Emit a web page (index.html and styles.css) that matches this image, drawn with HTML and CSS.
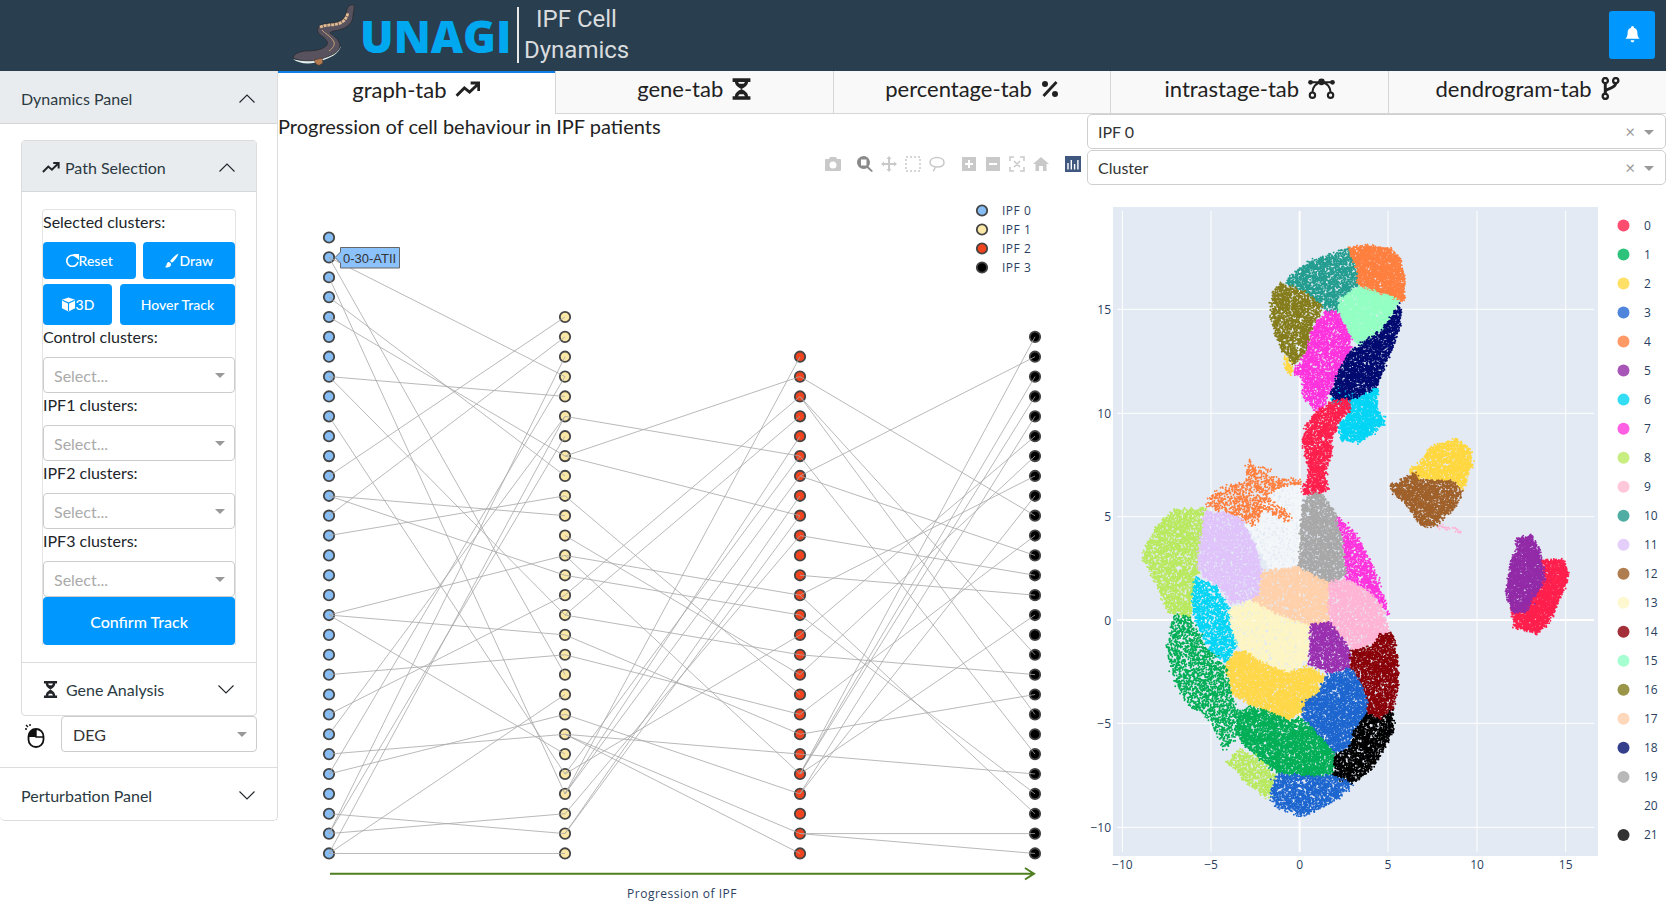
FILE: index.html
```html
<!DOCTYPE html>
<html lang="en">
<head>
  <meta charset="UTF-8" />
  <title>UNAGI IPF Cell Dynamics</title>
  <link rel="stylesheet" href="styles.css">
</head>
<body>
  <header class="topbar">
    <div class="brand">
      <svg class="eel" viewBox="0 0 80 70" width="80" height="70">
        <path class="eel-belly" d="M8 58 C14 63 26 64 36 60 C45 57 54 53 56 45 C51 53 42 55 34 58 C25 60 15 60 8 58 Z" />
        <path class="eel-body" d="M8 57 C9 53 13 51 20 50 C28 50 37 49 41 45 C44 42 42 39 38 36 C33 33 31 29 34 25 C39 21 50 23 56 19 C61 16 61 12 62 8 C63 5 66 3 69 4 C70 8 68 10 68 15 C68 22 62 27 54 29 C50 30 46 30 45 32 C49 35 55 39 55 45 C54 52 45 55 36 58 C27 61 14 60 8 57 Z" />
        <path class="eel-fin" d="M35 26 C42 23 52 25 58 20.500 C61 18 62 15 63 12" />
        <path class="eel-stripe" d="M37 29 C39 32 46 35 49 41 C50 44 48 47 44 50" />
        <path class="eel-head" d="M29 59 L37 57 L38 62 L34 64.500 L31 63 Z" />
      </svg>
      <span class="brand-name">UNAGI</span>
      <span class="brand-sub"><span>IPF Cell<br>Dynamics</span></span>
    </div>
    <button class="bell-btn">
      <svg viewBox="0 0 16 18" width="15" height="17"><path d="M8 0 C9 0 9.600 .8 9.500 1.700 C12 2.400 13.200 4.500 13.200 7 C13.200 10.500 14.200 12 15.500 13.500 L.5 13.500 C1.800 12 2.800 10.500 2.800 7 C2.800 4.500 4 2.400 6.500 1.700 C6.400 .8 7 0 8 0 Z M6 15 H10 C10 16.300 9 17.200 8 17.200 C7 17.200 6 16.300 6 15 Z" /></svg>
    </button>
  </header>

  <div class="layout">
    <aside class="sidebar">
      <div class="acc-head acc-head-open outer-head">
        <span>Dynamics Panel</span>
        <svg class="chev" viewBox="0 0 16 9" width="16" height="9"><path d="M.5 8.500 L8 1 L15.500 8.500" /></svg>
      </div>
      <div class="panel-body">
        <div class="inner-acc">
          <div class="acc-head acc-head-open inner-head">
            <span class="head-title">
              <svg class="ico-trend-sm" viewBox="0 0 20 14" width="18" height="13"><path d="M1 12 L7 6 L11 9.500 L18 2.500 M12.500 2 H18.500 V8" /></svg>
              Path Selection
            </span>
            <svg class="chev" viewBox="0 0 16 9" width="16" height="9"><path d="M.5 8.500 L8 1 L15.500 8.500" /></svg>
          </div>
          <div class="inner-body">
            <div class="track-card">
              <div class="field-label">Selected clusters:</div>
              <div class="btn-row btn-row-a">
                <button class="btn btn-half">
                  <svg class="btn-ico" viewBox="0 0 14 14" width="13" height="13"><path d="M11.500 3.500 A6 6 0 1 0 12.800 8.500" /><path class="solid" d="M9 .5 L13.500 .5 L13.500 5 Z" /></svg>Reset
                </button>
                <button class="btn btn-half">
                  <svg viewBox="0 0 16 16" width="15" height="15"><path class="solid" d="M15.500 .5 C13 1.500 9 5 6.500 8.500 L8.500 10.500 C11.500 8 14.500 4 15.500 .5 Z M5.500 9.500 C3 9.500 3 12 2.500 13.500 C2 14.500 1 15 .5 15 C3 16 8 15.500 7.500 11.500 Z" /></svg>Draw
                </button>
              </div>
              <div class="btn-row btn-row-b">
                <button class="btn btn-3d">
                  <svg viewBox="0 0 16 16" width="15" height="15"><path class="solid" d="M8 .5 L15 3 V12 L8 15.500 L1 12 V3 Z" /><path class="cut" d="M1.500 3.500 L8 6.500 L14.500 3.500 M8 6.500 V15" /></svg>3D
                </button>
                <button class="btn btn-hover">Hover Track</button>
              </div>
              <div class="field-label">Control clusters:</div>
              <div class="select select-empty">Select...<i class="caret"></i></div>
              <div class="field-label">IPF1 clusters:</div>
              <div class="select select-empty">Select...<i class="caret"></i></div>
              <div class="field-label">IPF2 clusters:</div>
              <div class="select select-empty">Select...<i class="caret"></i></div>
              <div class="field-label">IPF3 clusters:</div>
              <div class="select select-empty">Select...<i class="caret"></i></div>
              <button class="btn btn-confirm">Confirm Track</button>
            </div>
          </div>
          <div class="acc-head inner-closed">
            <span class="head-title">
              <svg class="ico-dna-sm" viewBox="0 0 16 18" width="15" height="17"><path d="M1 0 H15 V2.500 H13 C13 6 10 7.500 8 9 C10 10.500 13 12 13 15.500 H15 V18 H1 V15.500 H3 C3 12 6 10.500 8 9 C6 7.500 3 6 3 2.500 H1 Z M5.500 2.500 C5.700 3.300 6 4 6.500 4.500 H9.500 C10 4 10.300 3.300 10.500 2.500 Z M6.500 13.500 C6 14 5.700 14.700 5.500 15.500 H10.500 C10.300 14.700 10 14 9.500 13.500 Z" /></svg>
              Gene Analysis
            </span>
            <svg class="chev" viewBox="0 0 16 9" width="16" height="9"><path d="M.5 .5 L8 8 L15.500 .5" /></svg>
          </div>
        </div>
        <div class="mode-row">
          <svg class="mouse-ico" viewBox="0 0 20 24" width="20" height="24">
            <rect class="mouse-shell" x="3.500" y="5" width="15" height="18" rx="7.500" />
            <path class="mouse-fill" d="M3.500 13 V12.500 A7.500 7.500 0 0 1 11 5 V13 Z" />
            <path class="mouse-line" d="M11 5 V13 H18.500 M1 1 L3 3 M5 0 V2 M0 5 H2" />
          </svg>
          <div class="select select-deg">DEG<i class="caret"></i></div>
        </div>
      </div>
      <div class="acc-head perturb-head">
        <span>Perturbation Panel</span>
        <svg class="chev" viewBox="0 0 16 9" width="16" height="9"><path d="M.5 .5 L8 8 L15.500 .5" /></svg>
      </div>
    </aside>

    <main class="content">
      <nav class="tabs">
        <div class="tab tab-active">graph-tab
          <svg viewBox="0 0 24 16" width="25" height="17"><path class="stroke" d="M1.500 14 L9 6.500 L14 10.500 L22 3 M15 1.800 H22.800 V9.500" /></svg>
        </div>
        <div class="tab">gene-tab
          <svg viewBox="0 0 16 18" width="19" height="22"><path class="fill" d="M.5 0 H15.500 V3 H13.500 C13.500 6 10.500 7.500 8 9 C10.500 10.500 13.500 12 13.500 15 H15.500 V18 H.5 V15 H2.500 C2.500 12 5.500 10.500 8 9 C5.500 7.500 2.500 6 2.500 3 H.5 Z M5.200 3 C5.400 3.500 5.700 4.100 6.200 4.600 H9.800 C10.300 4.100 10.600 3.500 10.800 3 Z M6.200 13.400 C5.700 13.900 5.400 14.500 5.200 15 H10.800 C10.600 14.500 10.300 13.900 9.800 13.400 Z" /></svg>
        </div>
        <div class="tab">percentage-tab
          <svg viewBox="0 0 18 18" width="18" height="18"><path class="stroke" d="M15.500 2 L2.500 16" /><circle class="fill" cx="4" cy="4" r="3" /><circle class="fill" cx="14" cy="14" r="3" /></svg>
        </div>
        <div class="tab">intrastage-tab
          <svg viewBox="0 0 28 22" width="27" height="21"><path class="stroke thin" d="M2 4.500 H26 M14 4.500 C8 5 4.500 10 4.500 15 M14 4.500 C20 5 23.500 10 23.500 15" /><circle class="fill" cx="14" cy="4" r="3.500" /><circle class="fill" cx="2.500" cy="4.500" r="2.500" /><circle class="fill" cx="25.500" cy="4.500" r="2.500" /><circle class="ring" cx="4.500" cy="18" r="2.800" /><circle class="ring" cx="23.500" cy="18" r="2.800" /></svg>
        </div>
        <div class="tab">dendrogram-tab
          <svg viewBox="0 0 18 22" width="19" height="23"><path class="stroke" d="M4 6 V16 M4 14 C4 10.500 14 11.500 14 6" /><circle class="ring" cx="4" cy="3.500" r="2.500" /><circle class="ring" cx="14" cy="3.500" r="2.500" /><circle class="ring" cx="4" cy="18.500" r="2.500" /></svg>
        </div>
      </nav>

      <div class="tab-body">
        <section class="graph-col">
          <div class="graph-title">Progression of cell behaviour in IPF patients</div>
          <div class="modebar">
            <svg viewBox="0 0 16 14" width="16" height="14"><path d="M5 0 H11 L12 2 H15 C15.500 2 16 2.500 16 3 V13 C16 13.500 15.500 14 15 14 H1 C.5 14 0 13.500 0 13 V3 C0 2.500 .5 2 1 2 H4 Z M8 4.500 A3.500 3.500 0 1 0 8 11.500 A3.500 3.500 0 1 0 8 4.500 Z" /></svg>
            <svg class="mode-on" viewBox="0 0 16 16" width="16" height="16"><path d="M6.500 0 A6.500 6.500 0 0 1 11.500 10.500 L16 15 L14.500 16 L10 12 A6.500 6.500 0 1 1 6.500 0 Z M4 3.500 V9.500 H9.500 V3.500 Z" /></svg>
            <svg viewBox="0 0 16 16" width="16" height="16"><path d="M8 0 L10.500 3 H9 V7 H13 V5.500 L16 8 L13 10.500 V9 H9 V13 H10.500 L8 16 L5.500 13 H7 V9 H3 V10.500 L0 8 L3 5.500 V7 H7 V3 H5.500 Z" /></svg>
            <svg viewBox="0 0 16 16" width="16" height="16"><path class="dash" d="M1 1 H15 V15 H1 Z" /></svg>
            <svg viewBox="0 0 16 16" width="16" height="16"><path class="line" d="M8 1.500 C12 1.500 15 3.500 15 6.500 C15 9.500 12 11 8 11 C4 11 1 9 1 6.500 C1 3.500 4 1.500 8 1.500 Z M6 11 C6 13 5 14.500 4 15" /></svg>
            <svg class="gap" viewBox="-1 0 16 14" width="16" height="14"><path d="M0 0 H14 V14 H0 Z M6 3 V6 H3 V8 H6 V11 H8 V8 H11 V6 H8 V3 Z" /></svg>
            <svg viewBox="-1 0 16 14" width="16" height="14"><path d="M0 0 H14 V14 H0 Z M3 6 V8 H11 V6 Z" /></svg>
            <svg viewBox="0 0 16 16" width="16" height="16"><path class="line" d="M1 5 V1 H5 M11 1 H15 V5 M15 11 V15 H11 M5 15 H1 V11 M5 5 L11 11 M11 5 L5 11" /></svg>
            <svg viewBox="0 0 16 14" width="16" height="14"><path d="M8 0 L16 7 H13.500 V14 H10 V9 H6 V14 H2.500 V7 H0 Z" /></svg>
            <svg class="gap plotly-mark" viewBox="0 0 16 16" width="16" height="16"><path d="M0 0 H16 V16 H0 Z" /><path class="plotly-bars" d="M3 7 V13.500 M6.300 4 V13.500 M9.600 8 V13.500 M12.900 4 V13.500" /></svg>
          </div>
          <svg id="graphPlot" class="graph-plot" viewBox="278 141 809 771" width="809" height="771"></svg>
        </section>

        <section class="scatter-col">
          <div class="select select-top">IPF 0<b class="clear">×</b><i class="caret"></i></div>
          <div class="select select-top select-second">Cluster<b class="clear">×</b><i class="caret"></i></div>
          <div class="scatter-wrap">
            <svg id="scatterAxes" viewBox="1087 186 579 726" width="579" height="726"></svg>
            <canvas id="scatterCanvas" class="scatter-canvas" width="485" height="649"></canvas>
          </div>
        </section>
      </div>
    </main>
  </div>

  <script src="app.js"></script>
</body>
</html>
```

FILE: styles.css
```css
* {
  box-sizing: border-box;
}
html, body {
  margin: 0;
  height: 912px;
  overflow: hidden;
}
body {
  background: #fff;
  color: #212529;
  font-family: 'Lato', sans-serif;
  font-size: 16px;
}

/* top bar */
.topbar {
  height: 71px;
  background: #293f50;
  display: flex;
  justify-content: space-between;
  padding: 0 11px 0 285px;
}
.brand {
  display: flex;
  align-items: center;
}
.eel {
  margin-right: -5px;
}
.eel-body { fill: #57525e; stroke: #26262a; stroke-width: .7; }
.eel-fin { fill: none; stroke: #e0bb90; stroke-width: 2.800; stroke-dasharray: 3 .8; }
.eel-stripe { fill: none; stroke: #c9a27a; stroke-width: 1; }
.eel-belly { fill: #e4ecec; }
.eel-head { fill: #b27a50; stroke: #3a2a20; stroke-width: .5; }
.brand-name {
  color: #00a8f0;
  font-family: 'Open Sans', sans-serif;
  font-weight: 800;
  font-size: 44.500px;
  width: 157px;
}
.brand-sub {
  border-left: 2px solid #e8e8e8;
  height: 56px;
  color: #d9dcde;
  font-family: 'Roboto', sans-serif;
  font-size: 24px;
  line-height: 31px;
  text-align: center;
  padding: 0 0 0 5px;
  width: 112px;
  margin-top: -1px;
}
.brand-sub span {
  display: block;
  margin-top: -3px;
}
.bell-btn {
  width: 46px;
  height: 48px;
  margin-top: 11px;
  background: #0098ff;
  border: none;
  border-radius: 3px;
  padding: 2px 0 0;
}
.bell-btn svg { fill: #fff; }

/* left panel */
.layout {
  display: flex;
  height: 841px;
}
.sidebar {
  width: 278px;
  flex: none;
  height: 750px;
  border: 1px solid #dcdcdc;
  border-top: none;
  border-left: none;
  border-radius: 0 0 5px 5px;
}
.acc-head {
  display: flex;
  justify-content: space-between;
  align-items: center;
  color: #2b3a42;
  font-size: 16px;
  height: 53px;
  padding: 0 22px 0 21px;
}
.acc-head-open {
  background: #e9ecef;
  border-bottom: 1px solid #d4d6d8;
}
.outer-head {
  padding-top: 3px;
}
.chev {
  fill: none;
  stroke: #212529;
  stroke-width: 1.100;
}
.panel-body {
  padding: 16px 20px 16px 21px;
  height: 644px;
  border-bottom: 1px solid #dcdcdc;
}
.inner-acc {
  border: 1px solid #dcdcdc;
  border-radius: 4px;
  height: 576px;
}
.inner-head {
  height: 51px;
  padding: 2px 21px 0 20px;
}
.head-title {
  display: flex;
  align-items: center;
  gap: 5px;
}
.ico-trend-sm {
  fill: none;
  stroke: #212529;
  stroke-width: 2.200;
}
.ico-dna-sm { fill: #212529; margin-right: 3px; }
.inner-body {
  padding: 17px 20px 17px 20px;
  border-bottom: 1px solid #dcdcdc;
}
.track-card {
  border: 1px solid #e3e3e3;
  border-bottom: none;
  border-radius: 4px 4px 0 0;
}
.field-label {
  height: 32px;
  line-height: 24px;
  color: #212529;
  font-size: 16px;
}
.btn {
  background: #0098ff;
  color: #fff;
  border: none;
  border-radius: 4px;
  font-family: 'Lato', sans-serif;
  font-size: 14px;
  font-weight: 500;
  display: flex;
  align-items: center;
  justify-content: center;
  padding: 0;
}
.btn svg { flex: none; }
.btn .solid { fill: #fff; }
.btn .cut { fill: none; stroke: #0098ff; stroke-width: 1.200; }
.btn-ico { fill: none; stroke: #fff; stroke-width: 1.800; }
.btn-row {
  display: flex;
}
.btn-row-a {
  height: 37px;
  gap: 7px;
  margin-bottom: 5px;
}
.btn-row-b {
  height: 41px;
  gap: 8px;
}
.btn-half { flex: 1; }
.btn-3d { width: 69px; }
.btn-hover { flex: 1; }
.btn-confirm {
  width: 100%;
  height: 48px;
  font-size: 16px;
}
.select {
  position: relative;
  height: 36px;
  border: 1px solid #ccc;
  border-radius: 4px;
  background: #fff;
  display: flex;
  align-items: center;
  padding-left: 10px;
  font-size: 16px;
  color: #333;
}
.select-empty { color: #aaa; }
.caret {
  position: absolute;
  right: 9px;
  top: 15px;
  border-top: 5px solid #999;
  border-left: 5px solid transparent;
  border-right: 5px solid transparent;
}
.mode-row {
  display: flex;
  align-items: center;
  justify-content: space-between;
  padding-left: 4px;
}
.mouse-ico { margin-top: 4px; }
.mouse-shell { fill: #fff; stroke: #111; stroke-width: 1.800; }
.mouse-fill { fill: #111; }
.mouse-line { fill: none; stroke: #111; stroke-width: 1.400; }
.select-deg {
  width: 196px;
  padding-left: 11px;
}
.perturb-head {
  height: 53px;
  padding-top: 2px;
}

/* tabs */
.content {
  flex: 1;
  min-width: 0;
}
.tabs {
  display: flex;
  height: 43px;
}
.tab {
  flex: 1;
  display: flex;
  align-items: center;
  justify-content: center;
  gap: 9px;
  background: #f9f9f9;
  color: #212121;
  font-size: 22px;
  border-left: 1px solid #d6d6d6;
  border-bottom: 1px solid #d6d6d6;
  padding-bottom: 7px;
}
.tab-active {
  background: #fff;
  border-left: none;
  border-top: 2px solid #0d7ee6;
  border-bottom: none;
  padding-bottom: 9px;
}
.tab .stroke { fill: none; stroke: #212121; stroke-width: 2.800; }
.tab .stroke.thin { stroke-width: 2.200; }
.tab .fill { fill: #212121; }
.tab .ring { fill: none; stroke: #212121; stroke-width: 2.200; }

/* graph and scatter */
.tab-body {
  display: flex;
}
.graph-col {
  position: relative;
  width: 809px;
  flex: none;
}
.graph-title {
  height: 27px;
  font-size: 20px;
  line-height: 24px;
  color: #222;
  white-space: nowrap;
}
.graph-plot {
  display: block;
}
.modebar {
  position: absolute;
  top: 42px;
  left: 547px;
  display: flex;
  align-items: center;
  gap: 8px;
}
.modebar svg { fill: #c9c9c9; }
.modebar .gap { margin-left: 8px; }
.modebar .mode-on { fill: #8a8a8a; margin-left: 8px; }
.modebar .dash { fill: none; stroke: #c9c9c9; stroke-width: 1.500; stroke-dasharray: 2 2; }
.modebar .line { fill: none; stroke: #c9c9c9; stroke-width: 1.500; }
.modebar .plotly-mark { fill: #40587f; }
.modebar .plotly-bars { fill: none; stroke: #fff; stroke-width: 1.400; }
.scatter-col {
  width: 579px;
  flex: none;
}
.select-top {
  height: 35px;
  border-radius: 5px;
  padding-left: 10px;
  border-color: #cfcfcf;
}
.select-second {
  margin-top: 1px;
}
.clear {
  position: absolute;
  right: 30px;
  top: 6px;
  font-weight: 400;
  font-size: 17px;
  color: #999;
}
.select-top .caret { top: 15px; right: 11px; }
.scatter-wrap {
  position: relative;
  height: 726px;
  margin-top: 1px;
}
.scatter-wrap svg {
  display: block;
}
.scatter-canvas {
  position: absolute;
  left: 26px;
  top: 21px;
}
.tick, .legend-text, .graph-text {
  font-family: 'Open Sans', sans-serif;
  font-size: 12px;
  fill: #2a3f5f;
}
.graph-text {
  letter-spacing: .5px;
}
```

FILE: app.js
```js
// graph node positions, read off the first column of nodes
const COL_X = [329, 565, 800, 1035];
const COL_START = [0, 4, 6, 5];
const NODE_TOP = 237.5;
const NODE_STEP = 19.87;
const NODE_LAST = 31;
const COL_FILL = ["#87bdf5", "#fbe8a6", "#f0441e", "#000000"];
const SVG_NS = "http://www.w3.org/2000/svg";

const EDGES = [
  // IPF 0 -> IPF 1
  [[1,7],[1,22],[2,28],[3,12],[4,11],[7,8],[7,19],[9,27],[12,4],[14,5],[13,14],[13,17],[15,13],
   [27,7],[31,9],[19,16],[19,20],[19,26],[22,21],[24,18],[25,9],[26,25],[27,24],[29,30],[30,29],
   [31,31],[31,23],[30,6],[30,10]],
  // IPF 1 -> IPF 2
  [[11,7],[11,14],[9,11],[13,23],[15,22],[16,27],[16,18],[17,19],[19,21],[20,25],[21,24],[24,28],
   [25,26],[25,30],[25,31],[27,20],[28,10],[28,6],[18,8],[19,9],[27,11],[28,12],[30,13],[30,14],[29,15]],
  // IPF 2 -> IPF 3
  [[7,14],[12,6],[12,16],[8,21],[8,24],[11,26],[15,17],[27,5],[18,12],[27,7],[27,8],[28,9],[28,13],
   [17,18],[18,29],[19,28],[21,22],[25,23],[26,27],[30,30],[30,31],[27,19],[20,10],[22,11],[24,15]]
];

const TICKS_X = [[-10, 1122.4], [-5, 1211], [0, 1299.6], [5, 1388], [10, 1477], [15, 1565.7]];
const TICKS_Y = [[15, 309.3], [10, 413.3], [5, 516.7], [0, 620], [-5, 723.3], [-10, 827.3]];
const LEGEND = ["#ff4d70", "#2fc27a", "#ffe066", "#4f86dc", "#ff9a66", "#a855b8", "#33def5", "#ff5fe3",
  "#c8ee82", "#ffc8da", "#4fada3", "#e3cffa", "#b07d50", "#fef8d0", "#a33038", "#a6ffd0", "#9a9548",
  "#ffd8bc", "#333f8a", "#b8b8b8", "#ffffff", "#333333"];

// clusters in the coordinates of the reference crops: x, y, colour, density
const CLUSTERS = [
  { c: "#239d8f", d: 0.75, p: [515,185,545,150,590,120,650,100,690,85,715,150,715,200,665,240,660,275,625,275,610,250,570,215,520,195] },
  { c: "#857d1c", d: 0.75, p: [500,190,570,215,615,260,590,320,575,390,540,435,505,390,485,340,472,275,480,215] },
  { c: "#ff7f3f", d: 1.3, p: [690,85,730,78,805,85,830,115,842,170,842,240,825,240,760,215,715,200,715,150] },
  { c: "#93ffc3", d: 1.3, p: [715,200,760,215,825,240,815,280,780,330,720,375,695,350,675,310,660,275,665,240] },
  { c: "#ff33dd", d: 0.85, p: [625,275,660,275,675,310,695,350,695,395,665,445,640,510,610,575,590,565,565,530,560,470,535,460,575,390,590,320] },
  { c: "#00d5f5", d: 1.2, p: [660,500,715,530,770,500,765,570,790,605,750,640,720,665,670,660,660,620,695,570,640,545] },
  { c: "#000a70", d: 0.95, p: [830,250,835,300,810,380,790,430,770,495,715,530,650,545,640,520,665,445,695,395,720,375,780,330,815,280] },
  { c: "#ff1f4c", d: 0.95, p: [690,535,695,565,660,610,640,660,640,700,625,750,630,810,590,830,555,815,580,770,575,740,562,660,570,620,600,575,640,550] },
  { c: "#ffd83f", d: 1.0, p: [510,410,535,440,530,465,515,450] },
  { c: "#f4f7fa", d: 0.6, p: [450,830,500,800,550,790,560,830,555,1040,470,1050,445,1000,390,895,430,900] },
  { c: "#ff7f3f", d: 0.42, p: [415,715,430,745,475,740,465,770,520,780,550,780,560,790,500,800,460,825,530,890,520,905,450,870,430,920,390,895,345,875,290,860,315,815,360,795,410,785,405,745] },
  { c: "#ff33dd", d: 0.7, p: [650,885,700,930,740,1000,770,1080,790,1150,800,1190,780,1160,740,1110,680,1080,680,1020,670,960] },
  { c: "#a8a8a8", d: 0.95, p: [590,820,620,825,650,880,670,960,680,1060,640,1095,620,1090,550,1040,558,900,565,840] },
  { c: "#b9e95e", d: 0.65, p: [290,860,270,1040,275,1060,260,1090,255,1170,250,1190,190,1180,150,1080,120,1020,120,990,160,915,210,865,250,870] },
  { c: "#dfc3fa", d: 0.8, p: [290,875,350,880,390,895,430,980,450,1060,440,1130,415,1140,360,1150,340,1110,280,1060,270,1040] },
  { c: "#00d5f5", d: 0.65, p: [265,1070,320,1100,360,1170,360,1220,380,1270,355,1330,300,1290,260,1190,255,1130] },
  { c: "#ffd0aa", d: 0.9, p: [450,1055,550,1040,635,1090,635,1210,585,1215,540,1205,480,1180,420,1145,440,1130] },
  { c: "#ffb4d5", d: 0.9, p: [635,1085,680,1080,740,1110,780,1160,800,1235,750,1275,700,1290,650,1235,635,1210] },
  { c: "#fdf6c4", d: 0.9, p: [360,1170,415,1140,480,1180,580,1220,575,1325,520,1360,450,1330,400,1295,380,1270,360,1200] },
  { c: "#9a2fb0", d: 0.95, p: [585,1215,635,1205,690,1285,695,1345,640,1360,580,1330] },
  { c: "#8a0008", d: 0.85, p: [810,1240,825,1320,825,1395,810,1470,775,1500,740,1480,735,1420,695,1340,695,1290,755,1280,775,1245] },
  { c: "#ffd84a", d: 1.1, p: [375,1295,400,1295,450,1330,520,1360,575,1340,625,1370,605,1420,560,1475,520,1500,430,1460,370,1425,345,1340] },
  { c: "#1d66cf", d: 0.95, p: [625,1370,695,1345,735,1420,740,1480,705,1530,695,1580,650,1600,600,1540,560,1495,565,1450,605,1420] },
  { c: "#000000", d: 0.85, p: [810,1470,815,1530,770,1620,730,1670,695,1690,645,1670,645,1610,695,1580,705,1530,740,1480,775,1500] },
  { c: "#00af55", d: 0.9, p: [375,1470,430,1460,520,1500,560,1495,600,1540,650,1600,640,1665,590,1670,490,1660,440,1615,380,1550] },
  { c: "#00af55", d: 0.42, p: [205,1185,250,1190,300,1290,345,1340,365,1430,375,1470,380,1550,345,1590,300,1490,245,1455,200,1370,185,1280] },
  { c: "#b9e95e", d: 0.6, p: [385,1590,440,1615,490,1670,470,1740,410,1690,350,1625] },
  { c: "#1d66cf", d: 0.75, p: [490,1660,590,1670,640,1665,700,1690,650,1745,560,1790,490,1760,470,1725] },
  { c: "#ffd83f", d: 1.0, p: [855,755,890,720,920,680,985,655,1025,690,1030,730,1005,810,975,785,880,775] },
  { c: "#a0602a", d: 0.95, p: [805,795,875,760,885,780,975,785,1003,815,985,860,930,915,890,920,855,860,810,815] },
  { c: "#ffb4d5", d: 0.7, p: [930,915,1000,930,998,937,935,922] },
  { c: "#ff1f4c", d: 1.4, p: [1220,1020,1285,1020,1297,1065,1280,1120,1240,1210,1210,1240,1150,1220,1140,1165,1170,1160,1230,1075] },
  { c: "#922aa8", d: 1.4, p: [1150,960,1190,945,1215,985,1225,1040,1232,1075,1180,1170,1145,1180,1125,1120,1140,1020,1160,990] }
];

// small seeded generator so the picture is the same on every load
let seed = 20240;
function rnd() {
  seed = (seed * 1664525 + 1013904223) % 4294967296;
  return seed / 4294967296;
}

function make(tag, attrs, text) {
  const el = document.createElementNS(SVG_NS, tag);
  Object.keys(attrs).forEach(k => el.setAttribute(k, attrs[k]));
  if (text !== undefined) el.textContent = text;
  return el;
}

function nodeY(i) {
  return NODE_TOP + NODE_STEP * i;
}

function drawGraph() {
  const svg = document.getElementById("graphPlot");

  COL_X.forEach((x, col) => {
    for (let i = COL_START[col]; i <= NODE_LAST; i++) {
      svg.appendChild(make("circle", { cx: x, cy: nodeY(i), r: 5.2, fill: COL_FILL[col], stroke: "#444", "stroke-width": 1.8 }));
    }
  });

  EDGES.forEach((list, col) => {
    list.forEach(e => {
      svg.appendChild(make("line", {
        x1: COL_X[col], y1: nodeY(e[0]), x2: COL_X[col + 1], y2: nodeY(e[1]),
        stroke: "#a8a8a8", "stroke-width": 1, "stroke-opacity": 0.8
      }));
    });
  });

  // hover label on the second node
  svg.appendChild(make("path", {
    d: "M335 257.500 L340.500 252 V247.500 H399.500 V268 H340.500 V263 Z",
    fill: "#8cc2fb", stroke: "#666", "stroke-width": 1
  }));
  svg.appendChild(make("text", { x: 343, y: 262.500, "font-family": "Liberation Sans", "font-size": 13, fill: "#333" }, "0-30-ATII"));

  // legend
  ["IPF 0", "IPF 1", "IPF 2", "IPF 3"].forEach((name, i) => {
    const y = 210.500 + 19 * i;
    svg.appendChild(make("circle", { cx: 982, cy: y, r: 5.200, fill: COL_FILL[i], stroke: "#444", "stroke-width": 1.800 }));
    svg.appendChild(make("text", { x: 1002, y: y + 4, class: "graph-text" }, name));
  });

  // progression arrow
  svg.appendChild(make("path", {
    d: "M330 873.700 H1034 M1025 868 L1034 873.700 L1025 879.500",
    fill: "none", stroke: "#4f7f20", "stroke-width": 2
  }));
  svg.appendChild(make("text", { x: 682, y: 898, "text-anchor": "middle", class: "graph-text" }, "Progression of IPF"));
}

function drawScatterAxes() {
  const svg = document.getElementById("scatterAxes");
  TICKS_X.forEach(t => {
    const label = String(t[0]).replace("-", "\u2212");
    svg.appendChild(make("text", { x: t[1], y: 869, "text-anchor": "middle", class: "tick" }, label));
  });
  TICKS_Y.forEach(t => {
    const label = String(t[0]).replace("-", "\u2212");
    svg.appendChild(make("text", { x: 1111, y: t[1] + 4.500, "text-anchor": "end", class: "tick" }, label));
  });
  LEGEND.forEach((c, i) => {
    const y = 225.500 + 29.020 * i;
    svg.appendChild(make("circle", { cx: 1623.500, cy: y, r: 6, fill: c }));
    svg.appendChild(make("text", { x: 1644, y: y + 4, class: "legend-text" }, String(i)));
  });
}

function inside(pts, x, y) {
  let hit = false;
  for (let i = 0, j = pts.length - 2; i < pts.length; j = i, i += 2) {
    const yi = pts[i + 1], yj = pts[j + 1];
    if ((yi > y) !== (yj > y) && x < ((pts[j] - pts[i]) * (y - yi)) / (yj - yi) + pts[i]) hit = !hit;
  }
  return hit;
}

function drawScatter() {
  const cv = document.getElementById("scatterCanvas");
  const ctx = cv.getContext("2d");
  const ox = 1113, oy = 207;

  ctx.fillStyle = "#e3eaf4";
  ctx.fillRect(0, 0, cv.width, cv.height);

  ctx.fillStyle = "#fff";
  TICKS_X.forEach(t => {
    ctx.fillRect(t[1] - ox - (t[0] === 0 ? 1 : 0.5), 4, t[0] === 0 ? 2 : 1, cv.height - 8);
  });
  TICKS_Y.forEach(t => {
    ctx.fillRect(4, t[1] - oy - (t[0] === 0 ? 1 : 0.5), cv.width - 8, t[0] === 0 ? 2 : 1);
  });

  CLUSTERS.forEach(cl => {
    // crop coordinates to page pixels
    const pts = cl.p.map((v, i) => (i % 2 === 0 ? 1100 + v / 2.77 - ox : 220 + v / 3 - oy));
    let x0 = 1e9, x1 = -1e9, y0 = 1e9, y1 = -1e9;
    for (let i = 0; i < pts.length; i += 2) {
      x0 = Math.min(x0, pts[i]); x1 = Math.max(x1, pts[i]);
      y0 = Math.min(y0, pts[i + 1]); y1 = Math.max(y1, pts[i + 1]);
    }
    const tries = Math.round((x1 - x0) * (y1 - y0) * cl.d);
    ctx.fillStyle = cl.c;
    ctx.beginPath();
    for (let n = 0; n < tries; n++) {
      const x = x0 + rnd() * (x1 - x0);
      const y = y0 + rnd() * (y1 - y0);
      if (!inside(pts, x, y)) continue;
      // soft edge, a point now and then strays further out
      const spread = rnd() < 0.015 ? 6 : 2.5;
      const px = x + (rnd() + rnd() - 1) * spread;
      const py = y + (rnd() + rnd() - 1) * spread;
      ctx.moveTo(px + 0.95, py);
      ctx.arc(px, py, 0.95, 0, Math.PI * 2);
    }
    ctx.fill();
  });
}

drawGraph();
drawScatterAxes();
drawScatter();
```
